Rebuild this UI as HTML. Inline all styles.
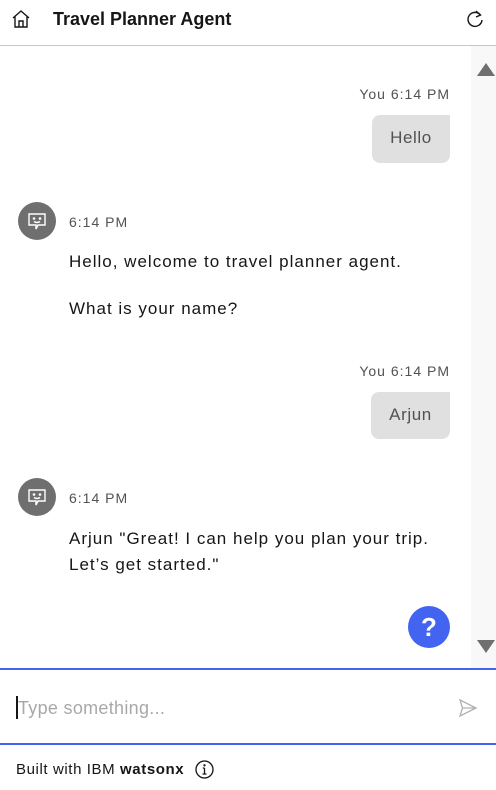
<!DOCTYPE html>
<html><head><style>
*{margin:0;padding:0;box-sizing:border-box}
body{width:496px;height:790px;overflow:hidden;background:#fff;font-family:"Liberation Sans",sans-serif;color:#161616;position:relative}
.abs{position:absolute}
.hdr{top:0;left:0;width:496px;height:46px;border-bottom:1px solid #c6c6c6}
.title{left:53px;top:8px;font-size:18px;font-weight:bold;line-height:22px}
.track{left:471px;top:46px;width:25px;height:622px;background:#f8f8f8}
.meta{font-size:14px;color:#525252;line-height:18px;letter-spacing:1px}
.bub{background:#e0e0e0;border-radius:8px 0 8px 8px;font-size:17px;color:#525252;text-align:center;line-height:46px;letter-spacing:0.6px}
.av{width:38px;height:38px;border-radius:50%;background:#6f6f6f}
.msg{font-size:17px;line-height:26px;color:#161616;letter-spacing:1px;white-space:nowrap}
</style></head><body>
<div class="abs hdr"></div>
<svg class="abs" style="left:11px;top:9px" width="20" height="20" viewBox="0 0 20 20" fill="none" stroke="#161616" stroke-width="1.4"><path d="M2 9 L10 2 L18 9 M4 7.5 V18 H16 V7.5 M8 18 V12 H12 V18"/></svg>
<div class="abs title">Travel Planner Agent</div>
<svg class="abs" style="left:465px;top:9px" width="20" height="20" viewBox="0 0 20 20" fill="none" stroke="#161616" stroke-width="1.4"><path d="M15.5 6 A7 7 0 1 0 17 11"/><path d="M11 2 L15.5 6 L11 8"/></svg>
<div class="abs track"></div>
<svg class="abs" style="left:476px;top:61px" width="20" height="16"><path d="M1 15 L10 2 L19 15 Z" fill="#6f6f6f"/></svg>
<svg class="abs" style="left:476px;top:639px" width="20" height="16"><path d="M1 1 L10 14 L19 1 Z" fill="#6f6f6f"/></svg>

<div class="abs meta" style="right:46px;top:85px">You 6:14 PM</div>
<div class="abs bub" style="left:372px;top:115px;width:78px;height:48px">Hello</div>

<div class="abs av" style="left:18px;top:202px"></div>
<svg class="abs" style="left:27px;top:211px" width="20" height="20" viewBox="0 0 20 20" fill="none" stroke="#fff" stroke-width="1.4"><path d="M2 3 H18 V14 H11 L9 18 V14 H2 Z"/><circle cx="7" cy="7.5" r="0.6" fill="#fff"/><circle cx="13" cy="7.5" r="0.6" fill="#fff"/><path d="M7 10.5 Q10 12.5 13 10.5"/></svg>
<div class="abs meta" style="left:69px;top:213px">6:14 PM</div>
<div class="abs msg" style="left:69px;top:249px">Hello, welcome to travel planner agent.</div>
<div class="abs msg" style="left:69px;top:296px">What is your name?</div>

<div class="abs meta" style="right:46px;top:362px">You 6:14 PM</div>
<div class="abs bub" style="left:371px;top:392px;width:79px;height:47px">Arjun</div>

<div class="abs av" style="left:18px;top:478px"></div>
<svg class="abs" style="left:27px;top:487px" width="20" height="20" viewBox="0 0 20 20" fill="none" stroke="#fff" stroke-width="1.4"><path d="M2 3 H18 V14 H11 L9 18 V14 H2 Z"/><circle cx="7" cy="7.5" r="0.6" fill="#fff"/><circle cx="13" cy="7.5" r="0.6" fill="#fff"/><path d="M7 10.5 Q10 12.5 13 10.5"/></svg>
<div class="abs meta" style="left:69px;top:489px">6:14 PM</div>
<div class="abs msg" style="left:69px;top:526px;letter-spacing:1px">Arjun "Great! I can help you plan your trip.<br>Let’s get started."</div>

<div class="abs" style="left:408px;top:606px;width:42px;height:42px;border-radius:50%;background:#4264f0;color:#fff;font-size:26px;font-weight:bold;text-align:center;line-height:42px">?</div>

<div class="abs" style="left:0;top:668px;width:496px;height:2px;background:#4264f0"></div>
<div class="abs" style="left:16px;top:696px;width:2px;height:23px;background:#161616"></div>
<div class="abs" style="left:18px;top:696px;font-size:18px;color:#a8a8a8;line-height:24px;letter-spacing:0.3px">Type something...</div>
<svg class="abs" style="left:458px;top:698px" width="20" height="20" viewBox="0 0 20 20" fill="none" stroke="#b0b0b0" stroke-width="1.3"><path d="M2 2 L18 10 L2 18 L4.5 10 Z M4.5 10 H18"/></svg>
<div class="abs" style="left:0;top:743px;width:496px;height:2px;background:#4264f0"></div>

<div class="abs" style="left:16px;top:760px;font-size:15px;line-height:20px;color:#161616;letter-spacing:0.6px">Built with IBM <b>watsonx</b></div>
<svg class="abs" style="left:195px;top:760px" width="19" height="19" viewBox="0 0 19 19" fill="none" stroke="#161616" stroke-width="1.3"><circle cx="9.5" cy="9.5" r="8.5"/><path d="M9.5 8 V14 M7.5 14 H11.5 M7.8 8 H9.5"/><circle cx="9.5" cy="5.3" r="0.5" fill="#161616"/></svg>
</body></html>
